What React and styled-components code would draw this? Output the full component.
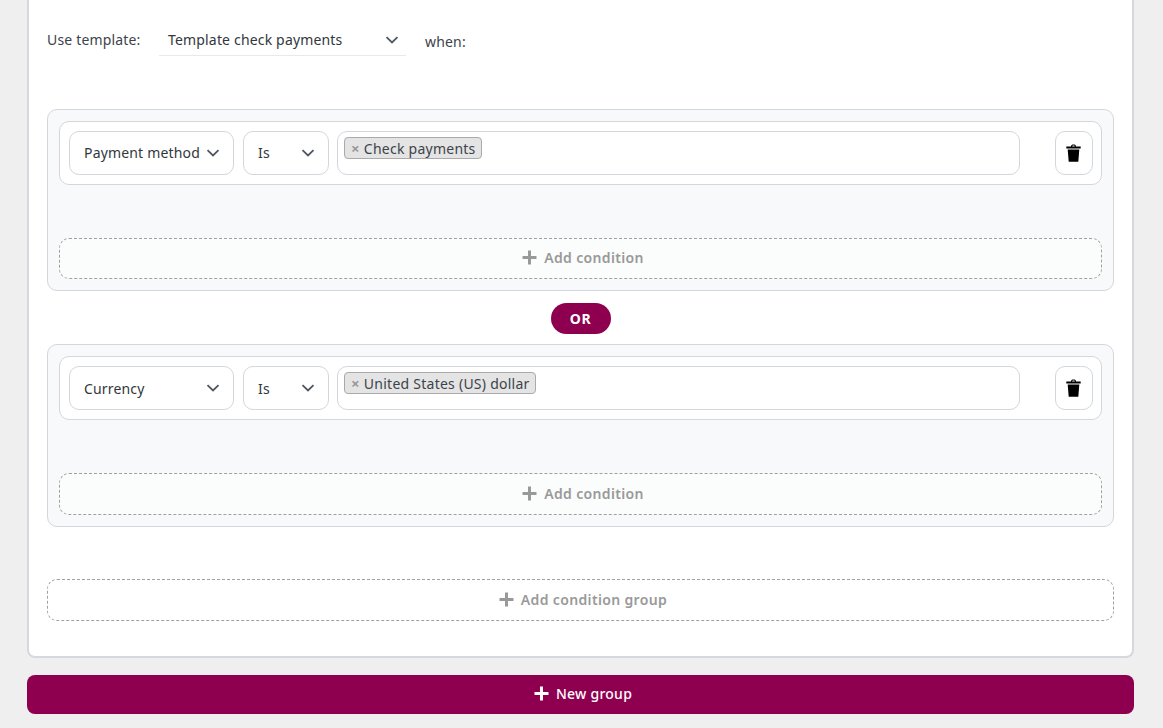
import React from 'react';
import styled, { createGlobalStyle } from 'styled-components';

const Global = createGlobalStyle`
html, body {
    margin: 0;
    height: 728px;
    overflow: hidden;
    background: #efefef;
    font-family: "Noto Sans", "Liberation Sans", sans-serif;
    font-size: 14px;
    letter-spacing: .17px;
    color: #3c434a;
}
* {
    box-sizing: border-box;
}
`

const Page = styled.div`
display: flex;
flex-direction: column;
width: 1107px;
margin-left: 27px;
`
const Card = styled.div`
display: flex;
flex-direction: column;
height: 658px;
padding: 22px 18px 0 18px;
background: #fff;
border: solid 2px #d5d8dd;
border-top: 0;
border-radius: 0 0 8px 8px;
`
const TemplateRow = styled.div`
display: flex;
align-items: flex-start;
height: 87px;
`
const TemplateLabel = styled.span`
width: 112px;
line-height: 36px;
`
const TemplateSelect = styled.div`
display: flex;
align-items: center;
justify-content: space-between;
width: 247px;
height: 34px;
padding: 2px 7px 0 9px;
border-bottom: solid 1px #e8e9ec;
color: #32373c;
`
const When = styled.span`
margin-left: 19px;
line-height: 40px;
`
const Group = styled.div`
display: flex;
flex-direction: column;
height: ${p => p.$height}px;
padding: 11px;
background: #f8f9fb;
border: solid 1px #d3d6dc;
border-radius: 10px;
`
const Rule = styled.div`
display: flex;
align-items: center;
height: 64px;
padding: 0 8px 0 9px;
background: #fff;
border: solid 1px #d3d6dc;
border-radius: 10px;
`
const Select = styled.div`
display: flex;
align-items: center;
justify-content: space-between;
width: ${p => p.$width}px;
height: 44px;
margin-right: ${p => p.$gap}px;
padding: 0 13px 0 14px;
background: #fff;
border: solid 1px #d3d6dc;
border-radius: 10px;
color: #32373c;
white-space: nowrap;
`
const SelectText = styled.span`
margin-bottom: ${p => p.$lift}px;
`
const ValueBox = styled.div`
display: flex;
align-items: flex-start;
width: 683px;
height: 44px;
padding: 5px 6px;
background: #fff;
border: solid 1px #d3d6dc;
border-radius: 10px;
`
const Tag = styled.div`
display: flex;
align-items: center;
height: 22px;
padding: 0 5px 0 6px;
background: #e4e4e4;
border: solid 1px #aaa;
border-radius: 4px;
color: #3c434a;
letter-spacing: .25px;
white-space: nowrap;
`
const TagRemove = styled.span`
margin-right: 4px;
color: #999;
font-weight: 700;
font-size: 15px;
`
const TrashButton = styled.div`
display: flex;
align-items: center;
justify-content: center;
width: 38px;
height: 44px;
margin-left: auto;
padding-right: 1px;
background: #fff;
border: solid 1px #d3d6dc;
border-radius: 10px;
`
const AddButton = styled.div`
display: flex;
align-items: center;
justify-content: center;
gap: 7px;
height: ${p => p.$height}px;
margin-top: ${p => p.$top}px;
padding: 0 0 2px 5px;
background: ${p => p.$bg};
border: dashed 1px #a0a0a0;
border-radius: 10px;
color: #999;
font-weight: 600;
letter-spacing: .35px;
`
const OrRow = styled.div`
display: flex;
justify-content: center;
margin: 12px 0 10px 0;
`
const OrPill = styled.div`
display: flex;
align-items: center;
justify-content: center;
width: 60px;
height: 31px;
background: #8e004f;
border-radius: 16px;
color: #fff;
font-weight: 700;
letter-spacing: .5px;
`
const NewGroup = styled.div`
display: flex;
align-items: center;
justify-content: center;
gap: 7px;
height: 39px;
margin-top: 17px;
padding: 0 0 2px 5px;
background: #8e004f;
border-radius: 8px;
color: #fff;
font-weight: 500;
letter-spacing: .25px;
`

const Chevron = () => (
    <svg width="14" height="8" viewBox="0 0 14 8" fill="none">
        <path d="M1.5 1.2L7 6.5l5.5-5.3" stroke="#50575e" strokeWidth="1.8" />
    </svg>
)

const Plus = ({ color }) => (
    <svg width="15" height="15" viewBox="0 0 15 15">
        <path d="M6 0.5h3v5.5h5.5v3H9v5.5H6V9H0.5V6H6z" fill={color} />
    </svg>
)

const Trash = () => (
    <svg width="15" height="18" viewBox="0 0 15 18">
        <path d="M5 2.5C5 .8 6 .4 7.500 .4S10 .8 10 2.500h4.700v2H.3v-2zM6.200 2.500h2.600C8.800 1.700 8.300 1.400 7.500 1.400S6.200 1.700 6.200 2.500z" fill="#000" fillRule="evenodd" />
        <path d="M1.700 5.500h11.600L12.300 17.700H2.700z" fill="#000" />
    </svg>
)

function ConditionGroup({ field, lift, tag, height, addHeight, addTop }) {
    return (
        <Group $height={height}>
            <Rule>
                <Select $width={165} $gap={9}>
                    <SelectText $lift={lift}>{field}</SelectText>
                    <Chevron />
                </Select>
                <Select $width={86} $gap={8}>
                    <SelectText $lift={lift}>Is</SelectText>
                    <Chevron />
                </Select>
                <ValueBox>
                    <Tag>
                        <TagRemove>×</TagRemove>
                        {tag}
                    </Tag>
                </ValueBox>
                <TrashButton>
                    <Trash />
                </TrashButton>
            </Rule>
            <AddButton $height={addHeight} $top={addTop} $bg="#fbfcfc">
                <Plus color="#999" />
                Add condition
            </AddButton>
        </Group>
    )
}

export default function App() {
    return (
        <Page>
            <Global />
            <Card>
                <TemplateRow>
                    <TemplateLabel>Use template:</TemplateLabel>
                    <TemplateSelect>
                        Template check payments
                        <Chevron />
                    </TemplateSelect>
                    <When>when:</When>
                </TemplateRow>
                <ConditionGroup field="Payment method" lift={2} tag="Check payments" height={182} addHeight={41} addTop={53} />
                <OrRow>
                    <OrPill>OR</OrPill>
                </OrRow>
                <ConditionGroup field="Currency" lift={0} tag="United States (US) dollar" height={183} addHeight={42} addTop={53} />
                <AddButton $height={42} $top={52} $bg="#fff">
                    <Plus color="#999" />
                    Add condition group
                </AddButton>
            </Card>
            <NewGroup>
                <Plus color="#fff" />
                New group
            </NewGroup>
        </Page>
    )
}
